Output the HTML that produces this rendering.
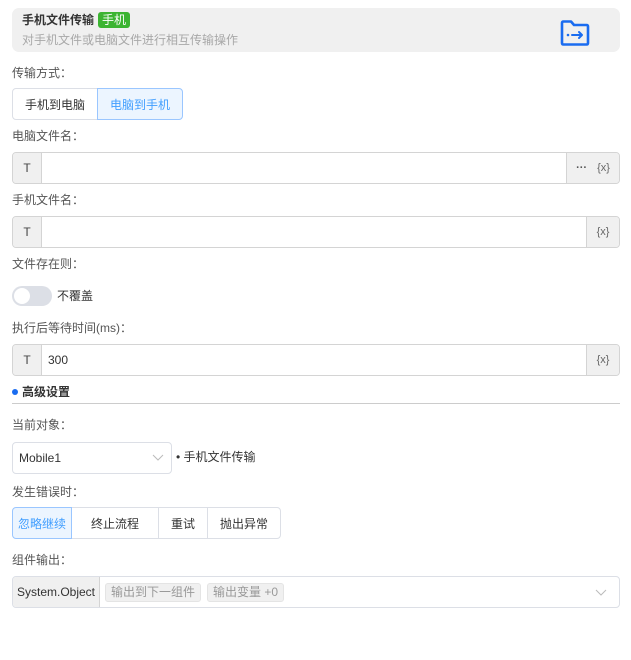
<!DOCTYPE html>
<html><head><meta charset="utf-8"><style>
*{box-sizing:border-box;margin:0;padding:0}
body{width:631px;height:660px;background:#fff;font-family:"Liberation Sans","Noto Sans CJK SC",sans-serif;font-size:12px;color:#333;position:relative;overflow:hidden}
.a{position:absolute}
.lbl{position:absolute;left:12px;color:#555;font-size:12px;line-height:16px}
.inp{position:absolute;left:12px;width:608px;height:32px;border:1px solid #d4d4d4;border-radius:4px;display:flex;overflow:hidden}
.t{width:29px;background:#f0f0f0;border-right:1px solid #d4d4d4;display:flex;align-items:center;justify-content:center;color:#444;font-weight:normal}
.mid{flex:1;display:flex;align-items:center;padding-left:6px;color:#333}
.r{background:#f0f0f0;border-left:1px solid #d4d4d4;display:flex;align-items:center;justify-content:center;color:#666;font-size:11px;gap:10px}
.bg{position:absolute;display:flex}
.bg div{display:flex;align-items:center;justify-content:center;border:1px solid #dcdfe6;margin-left:-1px;color:#333;height:32px}
.bg div:first-child{margin-left:0;border-radius:4px 0 0 4px}
.bg div:last-child{border-radius:0 4px 4px 0}
.bg .on{background:#ecf5ff;color:#409eff;border-color:#9ac6ff;position:relative;z-index:1}
</style></head><body>
<div class="a" style="left:12px;top:8px;width:608px;height:44px;background:#f0f0f0;border-radius:7px"></div>
<div class="a" style="left:22px;top:12px;font-weight:bold;font-size:12px;line-height:16px;color:#333">手机文件传输</div>
<div class="a" style="left:98px;top:12px;width:32px;height:16px;background:#3cb432;color:#fff;border-radius:3px;font-size:12px;line-height:16px;text-align:center">手机</div>
<div class="a" style="left:22px;top:32px;color:#a8a8a8;font-size:12px;line-height:16px">对手机文件或电脑文件进行相互传输操作</div>
<svg class="a" style="left:560px;top:20px" width="30" height="26" viewBox="0 0 30 26"><path d="M2 3 Q2 1.5 3.5 1.5 H11 L14 5 H26.5 Q28 5 28 6.5 V23 Q28 24.5 26.5 24.5 H3.5 Q2 24.5 2 23 Z" fill="none" stroke="#1a6cf0" stroke-width="2.6" stroke-linejoin="round"/><circle cx="8" cy="15" r="1.3" fill="#1a6cf0"/><path d="M12 15 H22 M19 12 L22 15 L19 18" fill="none" stroke="#1a6cf0" stroke-width="2" stroke-linecap="round" stroke-linejoin="round"/></svg>

<div class="lbl" style="top:65px">传输方式：</div>
<div class="bg" style="left:12px;top:88px"><div style="width:86px">手机到电脑</div><div class="on" style="width:86px">电脑到手机</div></div>

<div class="lbl" style="top:128px">电脑文件名：</div>
<div class="inp" style="top:152px"><div class="t">T</div><div class="mid"></div><div class="r" style="width:53px"><span style="font-weight:bold;color:#555">···</span><span>{x}</span></div></div>

<div class="lbl" style="top:192px">手机文件名：</div>
<div class="inp" style="top:216px"><div class="t">T</div><div class="mid"></div><div class="r" style="width:33px">{x}</div></div>

<div class="lbl" style="top:256px">文件存在则：</div>
<div class="a" style="left:12px;top:286px;width:40px;height:20px;background:#dcdfe6;border-radius:10px"><div class="a" style="left:2px;top:2px;width:16px;height:16px;background:#fff;border-radius:50%"></div></div>
<div class="a" style="left:57px;top:288px;line-height:16px;color:#333">不覆盖</div>

<div class="lbl" style="top:320px">执行后等待时间(ms)：</div>
<div class="inp" style="top:344px"><div class="t">T</div><div class="mid">300</div><div class="r" style="width:33px">{x}</div></div>

<div class="a" style="left:12px;top:389px;width:6px;height:6px;border-radius:50%;background:#1a6cf0"></div>
<div class="a" style="left:22px;top:384px;font-weight:bold;line-height:16px;color:#333">高级设置</div>
<div class="a" style="left:12px;top:403px;width:608px;height:1px;background:#ccc"></div>

<div class="lbl" style="top:417px">当前对象：</div>
<div class="a" style="left:12px;top:442px;width:160px;height:32px;border:1px solid #dcdfe6;border-radius:4px;padding-left:6px;line-height:30px;color:#333">Mobile1
<svg class="a" style="left:139px;top:11px" width="12" height="8"><path d="M1 1 L6 6 L11 1" fill="none" stroke="#bbb" stroke-width="1"/></svg></div>
<div class="a" style="left:176px;top:449px;line-height:16px;color:#333">• 手机文件传输</div>

<div class="lbl" style="top:484px">发生错误时：</div>
<div class="bg" style="left:12px;top:507px"><div class="on" style="width:60px">忽略继续</div><div style="width:88px">终止流程</div><div style="width:50px">重试</div><div style="width:74px">抛出异常</div></div>

<div class="lbl" style="top:552px">组件输出：</div>
<div class="inp" style="top:576px;border-color:#dcdfe6"><div class="t" style="width:87px;color:#333">System.Object</div><div class="mid" style="padding-left:5px;gap:6px"><span style="background:#f0f0f0;border:1px solid #e4e4e4;border-radius:3px;padding:0 5px;line-height:17px;color:#999">输出到下一组件</span><span style="background:#f0f0f0;border:1px solid #e4e4e4;border-radius:3px;padding:0 5px;line-height:17px;color:#999">输出变量 +0</span></div>
<svg style="margin:12px 12px 0 0" width="12" height="8"><path d="M1 1 L6 6 L11 1" fill="none" stroke="#bbb" stroke-width="1"/></svg></div>
</body></html>
